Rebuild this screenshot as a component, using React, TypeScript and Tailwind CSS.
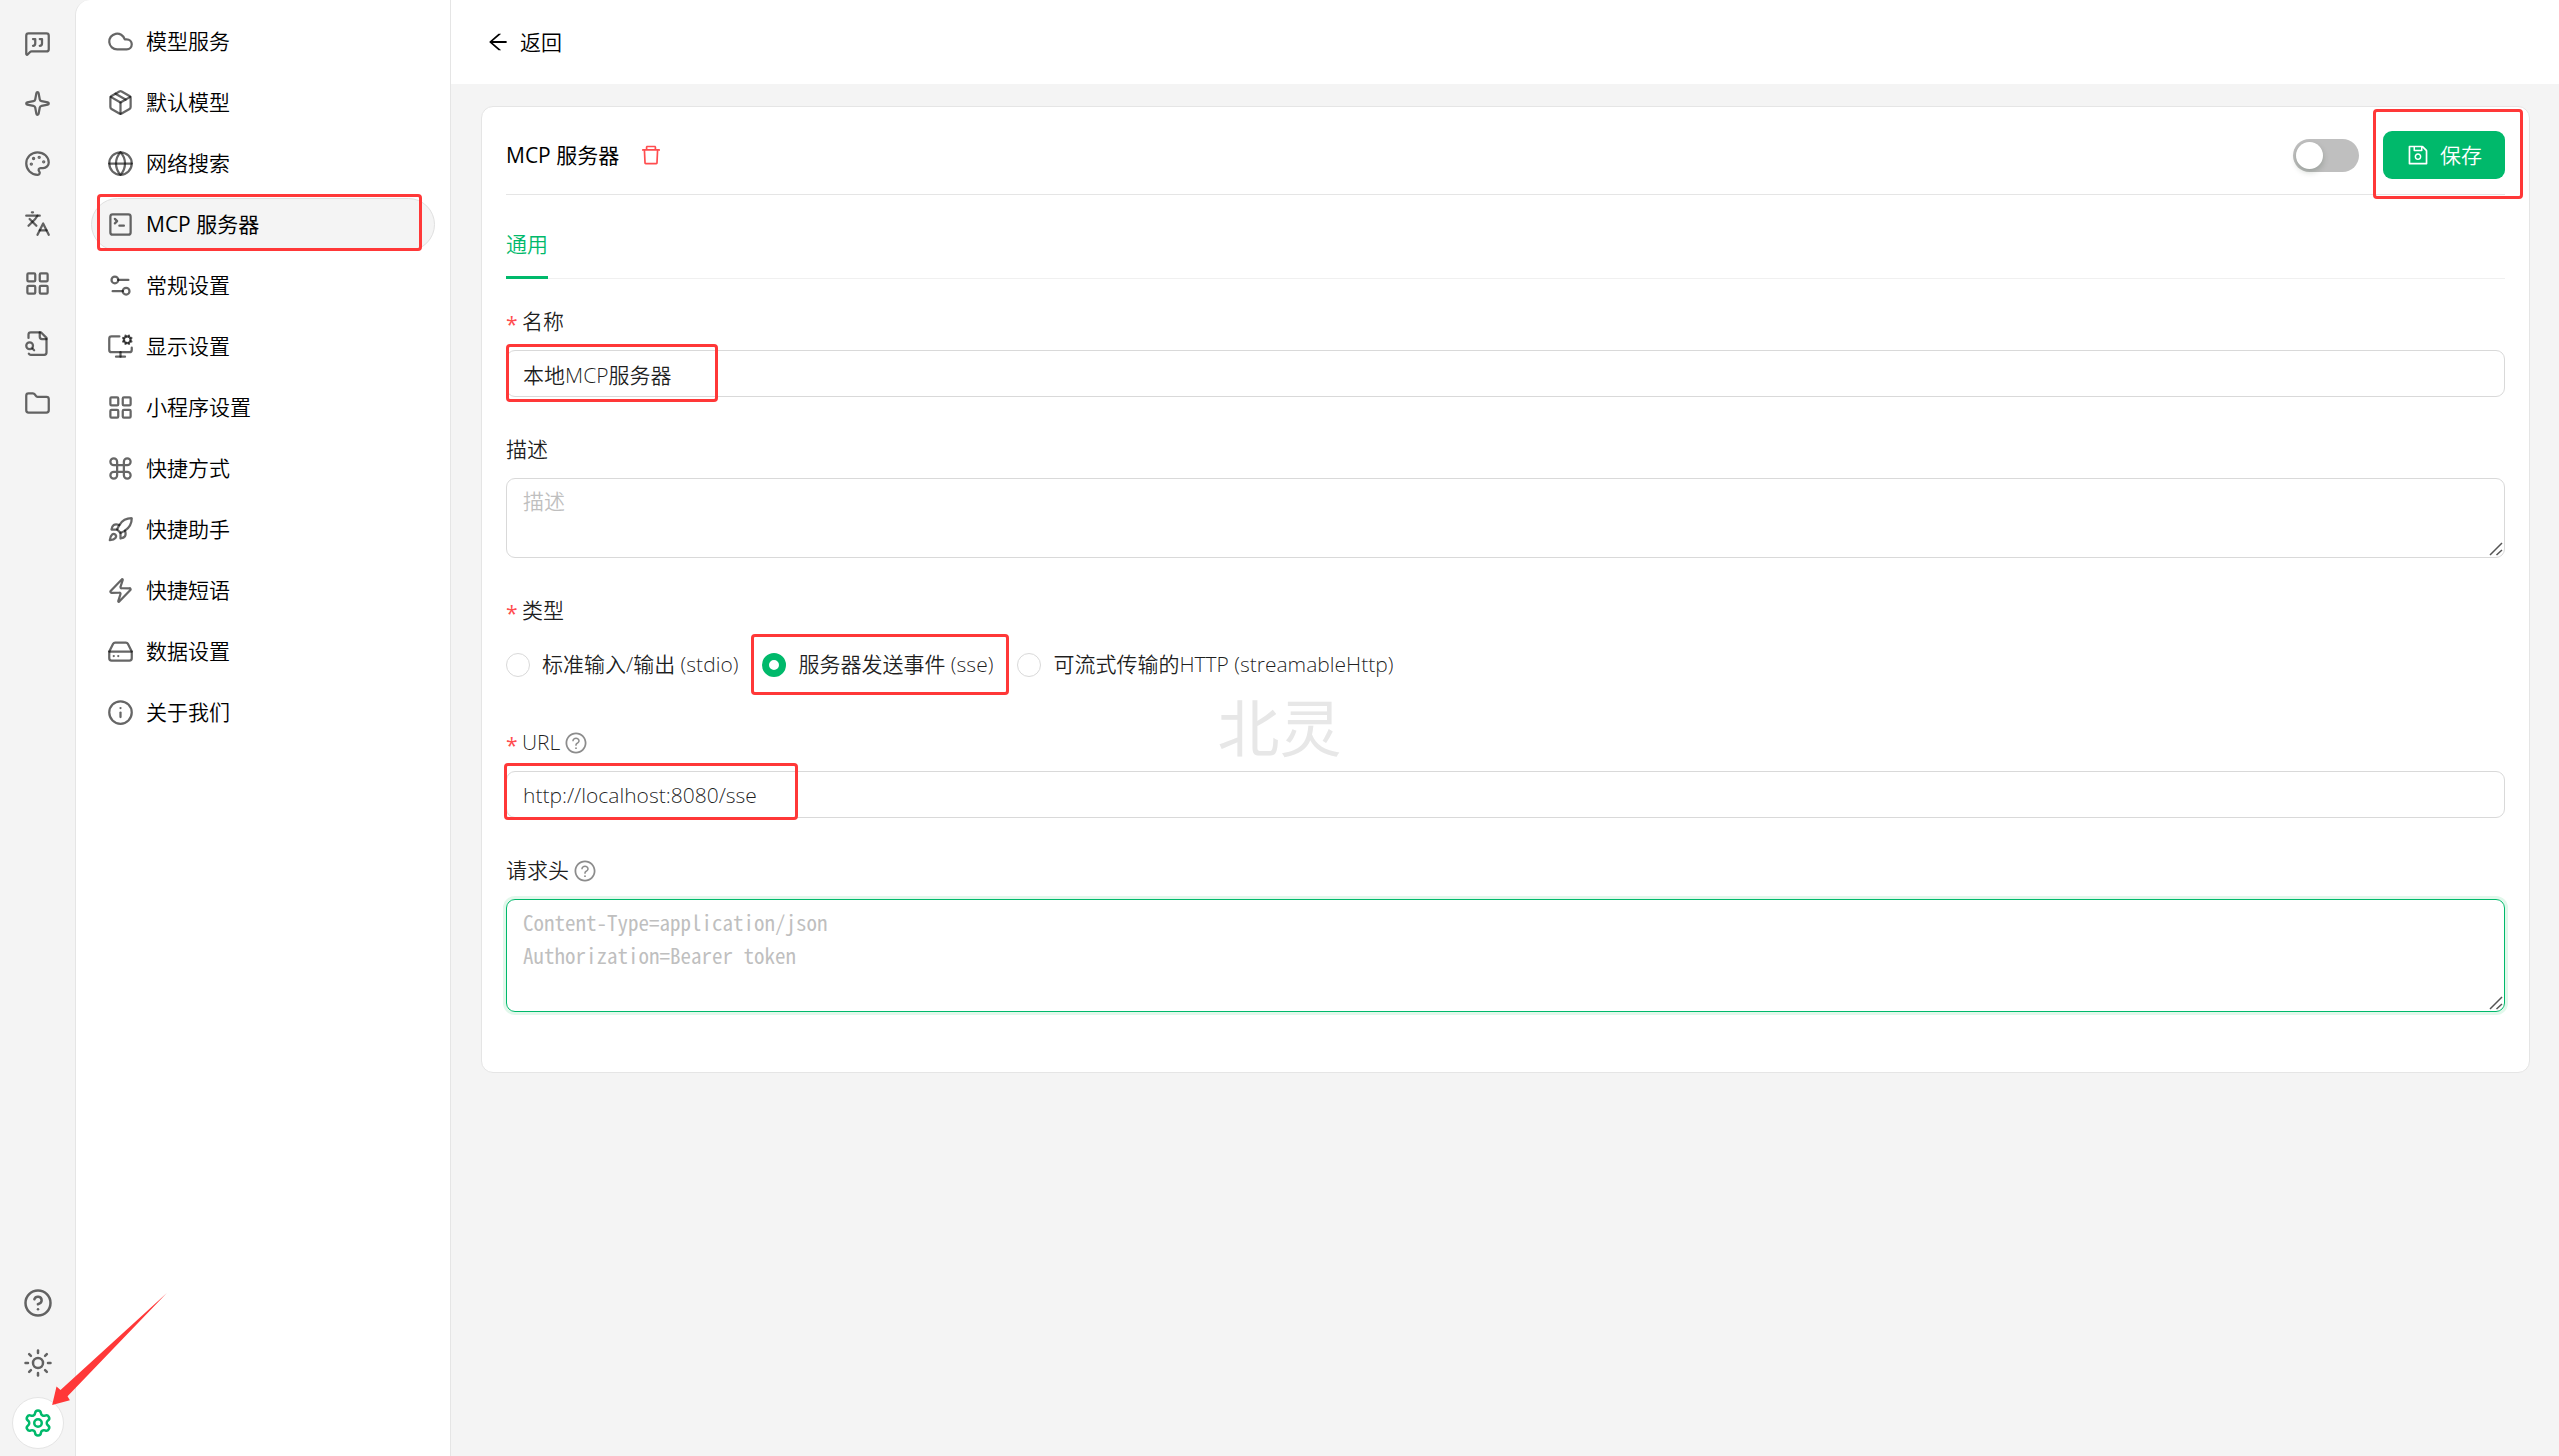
import React, { useState } from 'react'
import {
  Cloud,
  Command,
  Folder,
  Globe,
  HardDrive,
  Info,
  Languages,
  LayoutGrid,
  MessageSquareQuote,
  MonitorCog,
  Package,
  Palette,
  Rocket,
  Settings,
  Settings2,
  Sparkle,
  SquareTerminal,
  Sun,
  CircleQuestionMark,
  Zap
} from 'lucide-react'
import { AiOutlineArrowLeft, AiOutlineDelete, AiOutlineQuestionCircle, AiOutlineSave } from 'react-icons/ai'

interface IconProps {
  className?: string
}

function FileSearch({ className }: IconProps) {
  return (
    <svg viewBox="0 0 24 24" fill="none" stroke="currentColor" strokeWidth={2} strokeLinecap="round" strokeLinejoin="round" className={className}>
      <path d="M14 2v4a2 2 0 0 0 2 2h4" />
      <path d="M4.268 21a2 2 0 0 0 1.727 1H18a2 2 0 0 0 2-2V7l-5-5H6a2 2 0 0 0-2 2v3" />
      <path d="m9 18-1.5-1.5" />
      <circle cx="5" cy="14" r="3" />
    </svg>
  )
}

const RAIL_ITEMS = [
  { label: '助手', icon: MessageSquareQuote },
  { label: '智能体', icon: Sparkle },
  { label: '绘画', icon: Palette },
  { label: '翻译', icon: Languages },
  { label: '小程序', icon: LayoutGrid },
  { label: '知识库', icon: FileSearch },
  { label: '文件', icon: Folder }
]

const MENU_ITEMS = [
  { label: '模型服务', icon: Cloud },
  { label: '默认模型', icon: Package },
  { label: '网络搜索', icon: Globe },
  { label: 'MCP 服务器', icon: SquareTerminal },
  { label: '常规设置', icon: Settings2 },
  { label: '显示设置', icon: MonitorCog },
  { label: '小程序设置', icon: LayoutGrid },
  { label: '快捷方式', icon: Command },
  { label: '快捷助手', icon: Rocket },
  { label: '快捷短语', icon: Zap },
  { label: '数据设置', icon: HardDrive },
  { label: '关于我们', icon: Info }
]

const SERVER_TYPES = [
  { value: 'stdio', label: '标准输入/输出 (stdio)' },
  { value: 'sse', label: '服务器发送事件 (sse)' },
  { value: 'streamableHttp', label: '可流式传输的HTTP (streamableHttp)' }
]

// red frame laid over the part it points out
function Highlight({ className }: { className: string }) {
  return <div className={`pointer-events-none absolute z-10 rounded-[4px] border-3 border-[#ff3838] ${className}`} />
}

function Required() {
  return <span className="mr-[6px] h-[33px] w-[10px] text-center leading-[39px] font-normal text-[#ff4d4f]">*</span>
}

function ResizeGrip() {
  return (
    <svg viewBox="0 0 14 14" className="pointer-events-none absolute right-[2px] bottom-[2px] size-[14px]" stroke="#555" strokeWidth={1.5}>
      <path d="M1 13 13 1M7.500 13 13 8" />
    </svg>
  )
}

function Rail() {
  return (
    <aside className="flex w-[75px] shrink-0 flex-col items-center justify-between pt-[17px] pb-[7px]">
      <nav className="flex flex-col gap-2">
        {RAIL_ITEMS.map(({ label, icon: Icon }) => (
          <button key={label} type="button" aria-label={label} className="flex size-[52px] items-center justify-center rounded-full text-black/60">
            <Icon className="size-[27px]" />
          </button>
        ))}
      </nav>
      <div className="flex flex-col gap-2">
        <button type="button" aria-label="帮助" className="flex size-[52px] items-center justify-center rounded-full text-black/60">
          <CircleQuestionMark className="size-[30px]" />
        </button>
        <button type="button" aria-label="主题" className="flex size-[52px] items-center justify-center rounded-full text-black/60">
          <Sun className="size-[30px]" />
        </button>
        <div className="relative">
          <button type="button" aria-label="设置" className="flex size-[52px] items-center justify-center rounded-full border border-[#e5e5e5] bg-white text-[#00b96b]">
            <Settings className="size-[30px]" />
          </button>
          <svg viewBox="0 0 343 335" className="pointer-events-none absolute bottom-[44px] left-[40px] z-20 h-[112px] w-[115px]" fill="#ff3838">
            <polygon points="0,335 13,280 25,290 343,0 46,309 53,321" />
          </svg>
        </div>
      </div>
    </aside>
  )
}

function SettingsMenu() {
  const active = 'MCP 服务器'
  return (
    <nav className="flex w-[376px] shrink-0 flex-col gap-2 rounded-tl-[15px] border-x border-[#e5e5e5] bg-white p-[15px]">
      {MENU_ITEMS.map(({ label, icon: Icon }) => (
        <a
          key={label}
          href="#"
          className={`relative flex h-[53px] items-center gap-3 rounded-full border px-[15px] text-black ${label === active ? 'border-[#e0e0e0] bg-[#f4f4f4] font-normal' : 'border-transparent'}`}
        >
          <Icon className="size-[27px] text-black/60" />
          {label}
          {label === active ? <Highlight className="-top-[5px] right-[12px] -bottom-px left-[5px]" /> : null}
        </a>
      ))}
    </nav>
  )
}

export default function App() {
  const [enabled, setEnabled] = useState(false)
  const [name, setName] = useState('本地MCP服务器')
  const [description, setDescription] = useState('')
  const [type, setType] = useState('sse')
  const [url, setUrl] = useState('http://localhost:8080/sse')
  const [headers, setHeaders] = useState('')

  return (
    <div className="relative flex min-h-screen bg-[#f4f4f4] font-['Open_Sans','Noto_Sans_CJK_SC',sans-serif] text-[21px] leading-[33px] font-[350] text-black/88">
      <Rail />
      <SettingsMenu />

      <main className="min-w-0 flex-1">
        <header className="flex h-[84px] items-center bg-white px-[35px]">
          <button type="button" className="flex items-center gap-[10px] text-black">
            <AiOutlineArrowLeft className="size-6" />
            返回
          </button>
        </header>

        <section className="mx-[30px] mt-[22px] mr-[29px] rounded-xl border border-[#e5e5e5] bg-white p-6">
          <div className="flex h-[64px] items-start justify-between border-b border-[#e5e5e5]">
            <div className="flex h-12 items-center gap-5">
              <h1 className="font-normal text-black">MCP 服务器</h1>
              <button type="button" aria-label="删除" className="text-[#ff4d4f]">
                <AiOutlineDelete className="size-6" />
              </button>
            </div>
            <div className="flex h-12 items-center gap-6">
              <input
                type="checkbox"
                role="switch"
                aria-label="启用"
                checked={enabled}
                onChange={e => setEnabled(e.target.checked)}
                className="h-[33px] w-[66px] appearance-none rounded-full bg-[#bfbfbf] p-[3px] before:block before:size-[27px] before:rounded-full before:bg-white before:shadow-[0_3px_6px_rgba(0,35,11,0.2)] checked:bg-[#00b96b] checked:before:ml-[33px]"
              />
              <div className="relative">
                <button type="button" className="flex h-12 items-center gap-[10px] rounded-[9px] bg-[#00b96b] px-[23px] text-white">
                  <AiOutlineSave className="size-6" />
                  保存
                </button>
                <Highlight className="-top-[22px] -right-[18px] -bottom-[20px] -left-[10px]" />
              </div>
            </div>
          </div>

          <div role="tablist" className="mt-[15px] mb-[26px] flex border-b border-[#f0f0f0]">
            <button type="button" role="tab" aria-selected="true" className="-mb-px border-b-3 border-[#00b96b] pt-[18px] pb-[15px] text-[#00b96b]">
              通用
            </button>
          </div>

          <form className="flex flex-col gap-9 pb-9" onSubmit={e => e.preventDefault()}>
            <div className="flex flex-col gap-3">
              <label htmlFor="name" className="flex">
                <Required />
                名称
              </label>
              <div className="relative">
                <input
                  id="name"
                  value={name}
                  onChange={e => setName(e.target.value)}
                  className="block h-[47px] w-full rounded-[9px] border border-[#d9d9d9] px-4 outline-none"
                />
                <Highlight className="-top-[6px] -bottom-[5px] left-0 w-[212px]" />
              </div>
            </div>

            <div className="flex flex-col gap-3">
              <label htmlFor="description">描述</label>
              <div className="relative">
                <textarea
                  id="description"
                  rows={2}
                  placeholder="描述"
                  value={description}
                  onChange={e => setDescription(e.target.value)}
                  className="block w-full resize-none rounded-[9px] border border-[#d9d9d9] px-4 py-[6px] outline-none placeholder:text-[#bfbfbf]"
                />
                <ResizeGrip />
              </div>
            </div>

            <fieldset>
              <legend className="mb-3 flex">
                <Required />
                类型
              </legend>
              <div className="flex h-[51px] items-center gap-6">
                {SERVER_TYPES.map(item => (
                  <label key={item.value} className="relative flex items-center gap-3">
                    <input
                      type="radio"
                      name="type"
                      value={item.value}
                      checked={type === item.value}
                      onChange={() => setType(item.value)}
                      className="size-6 appearance-none rounded-full border border-[#d9d9d9] bg-white checked:border-7 checked:border-[#00b96b]"
                    />
                    {item.label}
                    {item.value === 'sse' ? <Highlight className="-top-[14px] -right-[16px] -bottom-[14px] -left-[11px]" /> : null}
                  </label>
                ))}
              </div>
            </fieldset>

            <div className="flex flex-col gap-3">
              <label htmlFor="url" className="flex items-center">
                <Required />
                URL
                <AiOutlineQuestionCircle className="ml-1 size-6 text-black/45" />
              </label>
              <div className="relative">
                <input
                  id="url"
                  value={url}
                  onChange={e => setUrl(e.target.value)}
                  className="block h-[47px] w-full rounded-[9px] border border-[#d9d9d9] px-4 outline-none"
                />
                <Highlight className="-top-[8px] -bottom-[2px] -left-[2px] w-[294px]" />
              </div>
            </div>

            <div className="flex flex-col gap-3">
              <label htmlFor="headers" className="flex items-center">
                请求头
                <AiOutlineQuestionCircle className="ml-1 size-6 text-black/45" />
              </label>
              <div className="relative">
                <textarea
                  id="headers"
                  rows={3}
                  placeholder={'Content-Type=application/json\nAuthorization=Bearer token'}
                  value={headers}
                  onChange={e => setHeaders(e.target.value)}
                  className="block w-full resize-none rounded-[9px] border border-[#00b96b] px-4 py-[6px] font-['Noto_Sans_Mono_CJK_SC','Liberation_Mono',monospace] shadow-[0_0_0_3px_#e1f8eb] outline-none placeholder:text-[#bfbfbf]"
                />
                <ResizeGrip />
              </div>
            </div>
          </form>
        </section>
      </main>

      <div className="pointer-events-none absolute inset-0 flex items-center justify-center text-[62px] leading-none font-normal text-[#e7e7e7]">北灵</div>
    </div>
  )
}
